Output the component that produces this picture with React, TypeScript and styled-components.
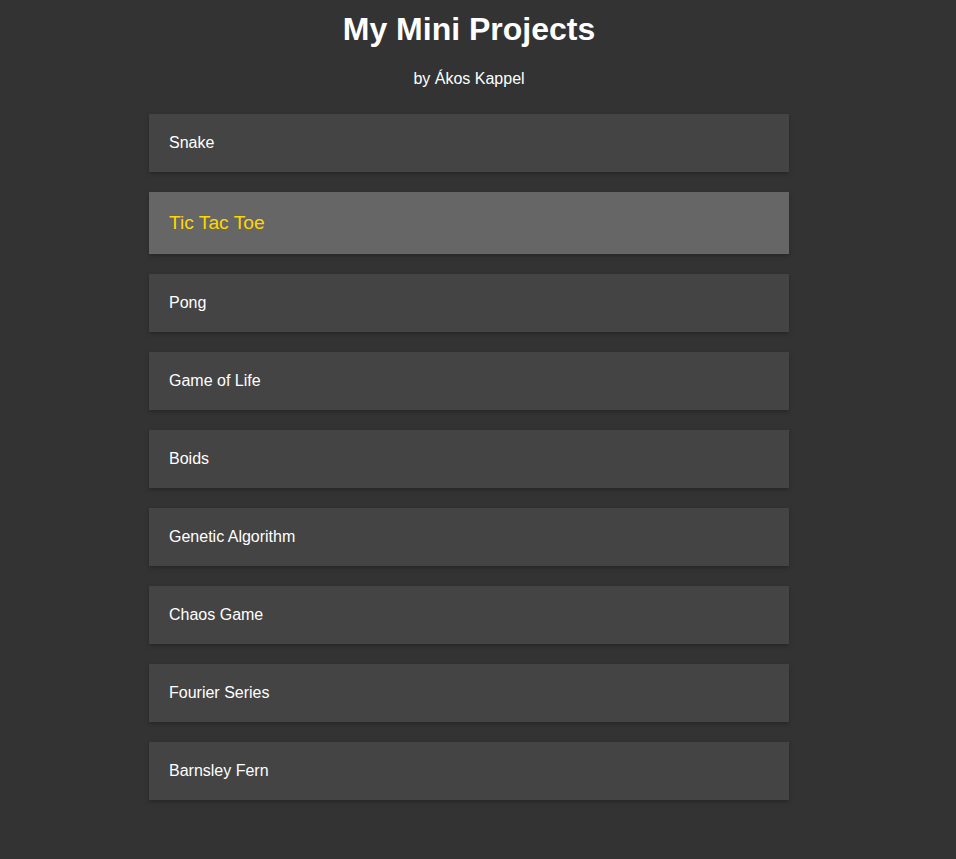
import React from "react";
import styled, { createGlobalStyle } from "styled-components";

const GlobalStyle = createGlobalStyle`
  html, body {
    margin: 0;
    padding: 0;
    background: #333333;
  }
  body {
    font-family: "Liberation Sans", Arial, sans-serif;
    color: #ffffff;
  }
`;

const Page = styled.div`
  box-sizing: border-box;
  width: 100%;
  padding: 11px 18px 40px 0;
  display: flex;
  flex-direction: column;
  align-items: center;
`;

const Title = styled.h1`
  margin: 0;
  font-size: 32px;
  font-weight: bold;
  line-height: normal;
  color: #ffffff;
`;

const Subtitle = styled.p`
  margin: 22px 0 0;
  font-size: 16px;
  line-height: normal;
  color: #ffffff;
`;

const List = styled.ul`
  list-style: none;
  margin: 26px 0 0;
  padding: 0;
  width: 640px;
  display: flex;
  flex-direction: column;
  gap: 20px;
`;

const Card = styled.li<{ $active?: boolean }>`
  box-sizing: border-box;
  padding: 20px;
  background: ${(p) => (p.$active ? "#666666" : "#444444")};
  color: ${(p) => (p.$active ? "#ffd700" : "#ffffff")};
  font-size: ${(p) => (p.$active ? "19.2px" : "16px")};
  line-height: normal;
  box-shadow: 0 2px 4px rgba(0, 0, 0, 0.25);
  cursor: pointer;
`;

const projects = [
  "Snake",
  "Tic Tac Toe",
  "Pong",
  "Game of Life",
  "Boids",
  "Genetic Algorithm",
  "Chaos Game",
  "Fourier Series",
  "Barnsley Fern",
];

export default function App() {
  return (
    <>
      <GlobalStyle />
      <Page>
        <Title>My Mini Projects</Title>
        <Subtitle>by Ákos Kappel</Subtitle>
        <List>
          {projects.map((name) => (
            <Card key={name} $active={name === "Tic Tac Toe"}>
              {name}
            </Card>
          ))}
        </List>
      </Page>
    </>
  );
}
